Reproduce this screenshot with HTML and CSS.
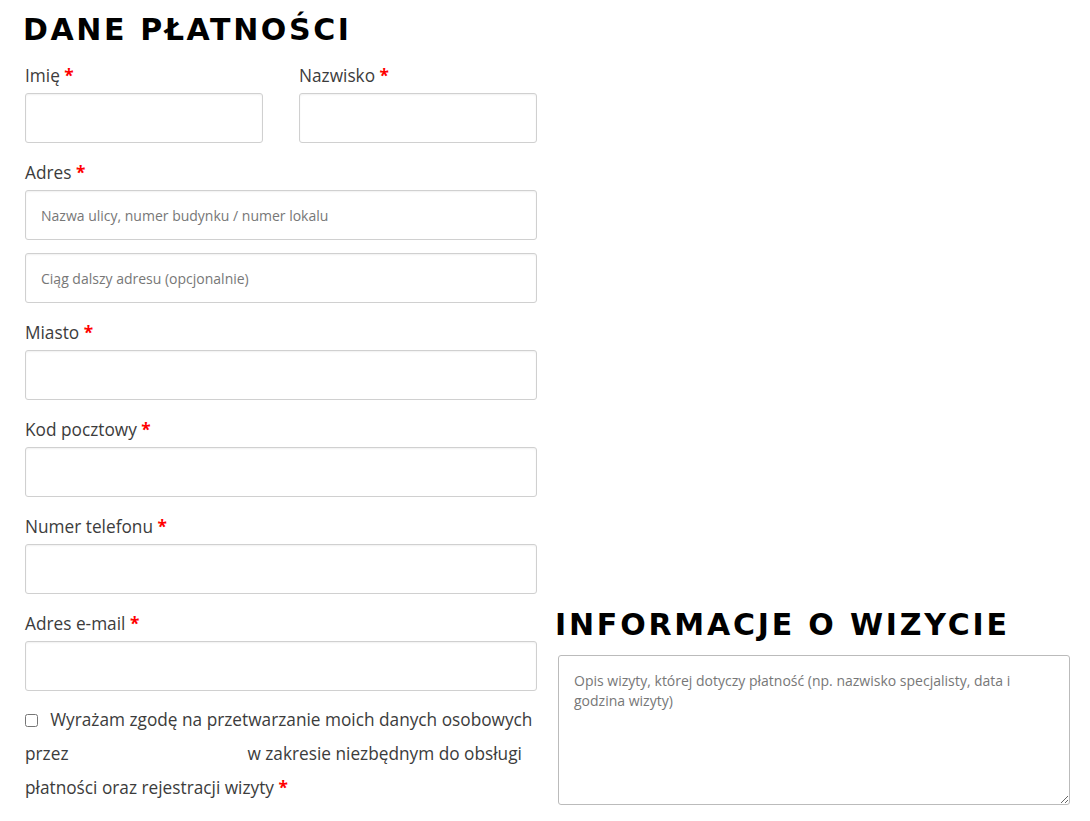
FILE: index.html
```html
<!DOCTYPE html>
<html lang="pl">
<head>
  <meta charset="UTF-8">
  <meta name="viewport" content="width=device-width, initial-scale=1">
  <title>Płatność za wizytę</title>
  <link rel="stylesheet" href="styles.css">
</head>
<body>

  <form class="checkout">

    <div class="col billing">
      <h3 class="section-title">Dane płatności</h3>

      <div class="pair">
        <div class="field">
          <label for="first_name">Imię <abbr class="required">*</abbr></label>
          <input type="text" id="first_name">
        </div>
        <div class="field">
          <label for="last_name">Nazwisko <abbr class="required">*</abbr></label>
          <input type="text" id="last_name">
        </div>
      </div>

      <div class="field">
        <label for="address_1">Adres <abbr class="required">*</abbr></label>
        <input type="text" id="address_1" placeholder="Nazwa ulicy, numer budynku / numer lokalu">
        <input type="text" id="address_2" class="extra" placeholder="Ciąg dalszy adresu (opcjonalnie)">
      </div>

      <div class="field">
        <label for="city">Miasto <abbr class="required">*</abbr></label>
        <input type="text" id="city">
      </div>

      <div class="field">
        <label for="postcode">Kod pocztowy <abbr class="required">*</abbr></label>
        <input type="text" id="postcode">
      </div>

      <div class="field">
        <label for="phone">Numer telefonu <abbr class="required">*</abbr></label>
        <input type="tel" id="phone">
      </div>

      <div class="field">
        <label for="email">Adres e-mail <abbr class="required">*</abbr></label>
        <input type="email" id="email">
      </div>

      <p class="consent">
        <input type="checkbox" id="consent">
        <label for="consent">Wyrażam zgodę na przetwarzanie moich danych osobowych przez <span class="blank"></span> w zakresie niezbędnym do obsługi płatności oraz rejestracji wizyty <abbr class="required">*</abbr></label>
      </p>
    </div>

    <div class="col visit">
      <h3 class="section-title">Informacje o wizycie</h3>
      <textarea id="order_comments" placeholder="Opis wizyty, której dotyczy płatność (np. nazwisko specjalisty, data i godzina wizyty)"></textarea>
    </div>

  </form>

</body>
</html>
```

FILE: styles.css
```css
body {
  background: white;
  font-family: "Open Sans", sans-serif;
  color: #3c3c3c;
  margin: 0;
  padding: 0 20px 0 25px;
}

.checkout {
  display: grid;
  grid-template-columns: 512px 512px;
  column-gap: 21px;
}

.visit {
  align-self: end;
}

.section-title {
  font-family: "DejaVu Sans", sans-serif;
  font-weight: bold;
  font-size: 30px;
  line-height: 36px;
  letter-spacing: 2.6px;
  text-transform: uppercase;
  color: #000;
  margin: 12px 0 15px -2px;
}

.visit .section-title {
  margin: 0 0 12px -3px;
  letter-spacing: 2.8px;
}

.pair {
  display: grid;
  grid-template-columns: 1fr 1fr;
  column-gap: 36px;
}

.field {
  margin-bottom: 17px;
}

label {
  font-size: 17.25px;
}

.field label {
  display: block;
  line-height: 25px;
  margin-bottom: 5px;
}

.required {
  color: #f00;
  font-weight: bold;
  text-decoration: none;
  border: none;
}

input[type="text"],
input[type="tel"],
input[type="email"] {
  display: block;
  width: 100%;
  height: 50px;
  box-sizing: border-box;
  padding: 0 15px;
  font-family: "Open Sans", sans-serif;
  font-size: 14px;
  color: #333;
  border: 1px solid #d0d0d0;
  border-radius: 3px;
  box-shadow: inset 0 1px 2px rgba(0, 0, 0, 0.06);
  background: white;
}

input.extra {
  margin-top: 13px;
}

::placeholder {
  color: #777;
  opacity: 1;
}

.consent {
  margin: -5px 0 0;
  line-height: 34px;
}

.consent input {
  margin: 0 8px 0 0;
  width: 13px;
  height: 13px;
  vertical-align: -1px;
}

.consent .blank {
  display: inline-block;
  width: 170px;
}

textarea {
  display: block;
  width: 100%;
  height: 150px;
  box-sizing: border-box;
  padding: 15px;
  font-family: "Open Sans", sans-serif;
  font-size: 14px;
  line-height: 20px;
  border: 1px solid #bbb;
  border-radius: 3px;
  resize: vertical;
}
```
